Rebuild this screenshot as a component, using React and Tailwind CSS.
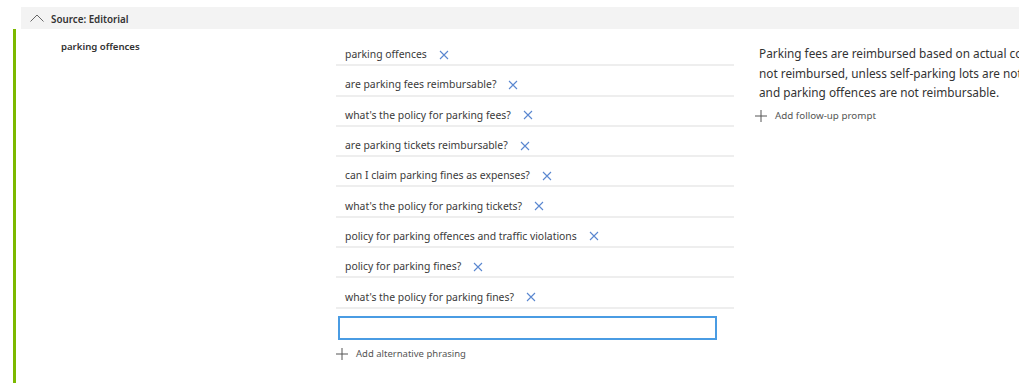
const phrasings = [
  'parking offences',
  'are parking fees reimbursable?',
  "what's the policy for parking fees?",
  'are parking tickets reimbursable?',
  'can I claim parking fines as expenses?',
  "what's the policy for parking tickets?",
  'policy for parking offences and traffic violations',
  'policy for parking fines?',
  "what's the policy for parking fines?",
]

const font = { fontFamily: '"Noto Sans", "Open Sans", sans-serif' }

function Cross() {
  return (
    <svg width="10" height="10" viewBox="0 0 10 10" className="shrink-0">
      <path d="M1 1 L9 9 M9 1 L1 9" stroke="#5a87d0" strokeWidth="1.1" fill="none" />
    </svg>
  )
}

function Plus({ size = 12 }) {
  return (
    <svg width={size} height={size} viewBox="0 0 12 12" className="shrink-0">
      <path d="M6 0 V12 M0 6 H12" stroke="#555" strokeWidth="1" fill="none" />
    </svg>
  )
}

export default function App() {
  return (
    <div className="w-[1019px] h-[383px] overflow-hidden bg-white text-[#333]" style={font}>
      <div className="mt-[7px] ml-[21px] h-[22px] bg-[#f3f3f3] flex items-center">
        <svg width="14" height="8" viewBox="0 0 14 8" className="ml-[9px]">
          <path d="M0.5 7.5 L7 1 L13.5 7.5" stroke="#666" strokeWidth="1" fill="none" />
        </svg>
        <span className="ml-[7px] pt-[3px] text-[9.8px] font-semibold leading-none">Source: Editorial</span>
      </div>

      <div className="ml-[13px] h-[354px] border-l-[3px] border-[#7cb900] flex">
        <div className="w-[320px] shrink-0 pl-[45px] pt-[10px] text-[9.6px] font-semibold leading-[15px]">
          parking offences
        </div>

        <div className="w-[398px] shrink-0 pt-[7px]">
          {phrasings.map((p) => (
            <div key={p} className="h-[30.3px] box-border border-b-2 border-[#eeeeee] flex items-center pt-[9px] pl-[9px] gap-[12px]">
              <span className="text-[10.4px] leading-[15px] whitespace-nowrap text-[#3a3a3a]">{p}</span>
              <Cross />
            </div>
          ))}
          <div className="mt-[7px] ml-[2px] w-[379px] h-[24px] border-2 border-[#4a9ce3] bg-white" />
          <div className="mt-[7px] flex items-center gap-[8px]">
            <Plus />
            <span className="text-[9.5px] text-[#555] leading-[14px]">Add alternative phrasing</span>
          </div>
        </div>

        <div className="pl-[25px] pt-[15px] shrink-0">
          <div className="text-[11.8px] leading-[19.5px] whitespace-nowrap">
            <div>Parking fees are reimbursed based on actual costs. Valet parking fees are</div>
            <div>not reimbursed, unless self-parking lots are not available. Parking tickets</div>
            <div>and parking offences are not reimbursable.</div>
          </div>
          <div className="mt-[6px] -ml-[4px] flex items-center gap-[8px]">
            <Plus />
            <span className="text-[9.8px] text-[#555] leading-[14px]">Add follow-up prompt</span>
          </div>
        </div>
      </div>
    </div>
  )
}
